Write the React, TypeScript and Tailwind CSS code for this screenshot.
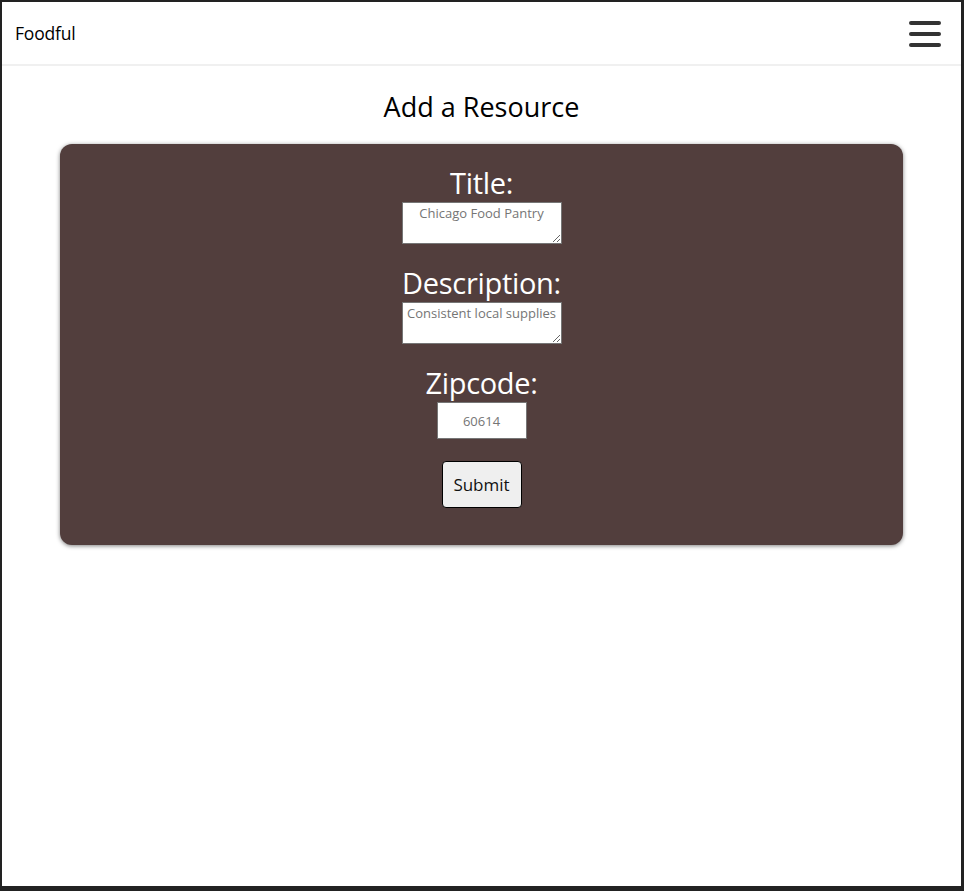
export default function App() {
  const font = { fontFamily: '"Open Sans", "Noto Sans", sans-serif' };
  return (
    <div className="w-[964px] h-[891px] bg-[#222] pt-[2px] pl-[2px] pr-[3px] pb-[5px]" style={font}>
      <div className="w-full h-full bg-white flex flex-col">
        <div className="h-[64px] flex items-center justify-between pl-[13px] pr-[20px] border-b-2 border-[#f0f0f0]">
          <span className="text-[17.5px] text-black tracking-[-0.2px]">Foodful</span>
          <div className="flex flex-col gap-[7px] mt-[1px]">
            <div className="w-[32px] h-[4px] rounded-full bg-[#333]" />
            <div className="w-[32px] h-[4px] rounded-full bg-[#333]" />
            <div className="w-[32px] h-[4px] rounded-full bg-[#333]" />
          </div>
        </div>
        <h1 className="text-center text-[27px] text-black mt-[23px] leading-[36px]">Add a Resource</h1>
        <div className="mx-[58px] mt-[19px] h-[401px] rounded-[12px] bg-[#523e3d] shadow-[0_1px_4px_rgba(0,0,0,0.5)] flex flex-col items-center pt-[20px]">
          <label className="text-white text-[29px] leading-[38px] tracking-[-0.3px]">Title:</label>
          <textarea
            className="w-[160px] h-[42px] bg-white border border-[#767676] text-[13px] text-center text-[#757575] placeholder:text-[#757575] pt-[1px] outline-none"
            placeholder="Chicago Food Pantry"
          />
          <label className="text-white text-[29px] leading-[38px] tracking-[-0.3px] mt-[20px]">Description:</label>
          <textarea
            className="w-[160px] h-[42px] bg-white border border-[#767676] text-[13px] text-center text-[#757575] placeholder:text-[#757575] pt-[1px] outline-none"
            placeholder="Consistent local supplies"
          />
          <label className="text-white text-[29px] leading-[38px] tracking-[-0.3px] mt-[20px]">Zipcode:</label>
          <input
            className="w-[90px] h-[37px] bg-white border border-[#767676] text-[13px] text-center text-[#757575] placeholder:text-[#757575] outline-none"
            placeholder="60614"
          />
          <button className="mt-[22px] w-[80px] h-[47px] rounded-[4px] bg-[#efefef] border border-black text-[17px] text-[#111]">
            Submit
          </button>
        </div>
      </div>
    </div>
  );
}
